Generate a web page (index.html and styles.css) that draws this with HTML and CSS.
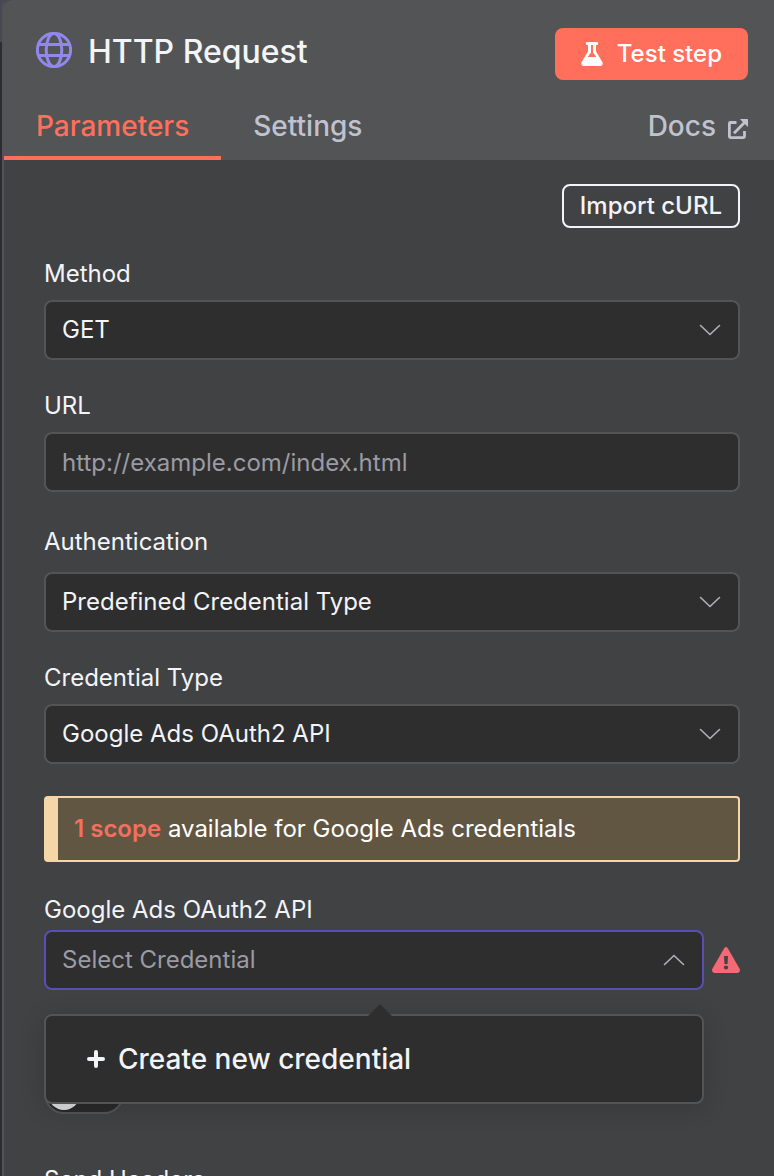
FILE: index.html
```html
<!DOCTYPE html>
<html lang="en">
<head>
<meta charset="utf-8">
<meta name="viewport" content="width=device-width, initial-scale=1">
<title>HTTP Request</title>
<link rel="stylesheet" href="styles.css">
</head>
<body>
<main class="panel">
  <header class="header">
    <div class="title-row">
      <svg class="globe" viewBox="0 0 36 36" aria-hidden="true">
        <circle cx="18" cy="18" r="16.6"/>
        <ellipse cx="18" cy="18" rx="7.8" ry="16.6"/>
        <path d="M2.5 12.4h31M2.5 23.6h31"/>
      </svg>
      <h1 class="title">HTTP Request</h1>
      <button class="test-button" type="button">
        <svg class="flask" viewBox="0 0 22 24" aria-hidden="true">
          <path fill-rule="evenodd" d="M5.8 0h10.4q.8 0 .8.8v1.4q0 .8-.8.8H15v6.6l6.2 10.1C22.4 21.8 21.2 24 18.9 24H3.1C.8 24-.4 21.800.8 19.7L7 9.6V3H5.8Q5 3 5 2.200V.8Q5 0 5.800 0zM10 3v7.400L6.700 15h8.600L12 10.400V3z"/>
        </svg>
        Test step
      </button>
    </div>
    <nav class="tabs">
      <a class="tab tab-active" href="#parameters">Parameters</a>
      <a class="tab" href="#settings">Settings</a>
      <a class="tab tab-docs" href="#docs">Docs
        <svg class="external" viewBox="0 0 20 20" aria-hidden="true">
          <path class="external-line" d="M8.500 3.500H2.400Q1.400 3.500 1.400 4.500V17.600Q1.400 18.600 2.400 18.600H15.500Q16.500 18.600 16.500 17.600V12M6 14.300L17 3"/>
          <path class="external-head" d="M12 0h7.200q.8 0 .8.8V8l-2.400-2.200-3.400-3.400z"/>
        </svg>
      </a>
    </nav>
  </header>

  <form class="form" id="parameters">
    <button class="import-button" type="button">Import cURL</button>

    <div class="field">
      <label class="label" for="method">Method</label>
      <div class="select-wrap">
        <select class="control" id="method"><option>GET</option></select>
        <svg class="chevron" viewBox="0 0 22 12" aria-hidden="true"><path d="M1.500 1.500l9.500 9 9.500-9"/></svg>
      </div>
    </div>

    <div class="field">
      <label class="label" for="url">URL</label>
      <input class="control" id="url" type="text" placeholder="http://example.com/index.html">
    </div>

    <div class="field field-spaced">
      <label class="label" for="auth">Authentication</label>
      <div class="select-wrap">
        <select class="control" id="auth"><option>Predefined Credential Type</option></select>
        <svg class="chevron" viewBox="0 0 22 12" aria-hidden="true"><path d="M1.500 1.500l9.500 9 9.500-9"/></svg>
      </div>
    </div>

    <div class="field">
      <label class="label" for="type">Credential Type</label>
      <div class="select-wrap">
        <select class="control" id="type"><option>Google Ads OAuth2 API</option></select>
        <svg class="chevron" viewBox="0 0 22 12" aria-hidden="true"><path d="M1.500 1.500l9.500 9 9.500-9"/></svg>
      </div>
    </div>

    <p class="notice"><a class="scope" href="#scopes">1 scope</a> available for Google Ads credentials</p>

    <div class="field field-tight">
      <label class="label" for="credential">Google Ads OAuth2 API</label>
      <div class="credential-row">
        <div class="select-wrap">
          <select class="control control-open" id="credential"><option>Select Credential</option></select>
          <svg class="chevron" viewBox="0 0 22 12" aria-hidden="true"><path d="M1.500 10.500l9.500-9 9.500 9"/></svg>
          <div class="menu">
            <svg class="menu-arrow" viewBox="0 0 24 12" aria-hidden="true"><path d="M0 12L11 1q1-1 2 0l11 11z"/></svg>
            <button class="menu-item" type="button">
              <svg class="plus" viewBox="0 0 18 18" aria-hidden="true"><path d="M9 2v14M2 9h14"/></svg>
              Create new credential
            </button>
          </div>
        </div>
        <svg class="warning" viewBox="0 0 28 26" role="img" aria-label="Warning">
          <path class="warning-shape" d="M12.200 1.200q1.800-2.200 3.600 0L27.600 21.800Q28.800 25.400 25.800 26H2.200Q-.8 25.400.4 21.800z"/>
          <path class="warning-mark" d="M12 9h4l-.5 8h-3z"/>
          <circle class="warning-mark" cx="14" cy="20.500" r="2.100"/>
        </svg>
      </div>
    </div>

    <input class="toggle" type="checkbox" aria-label="Toggle">
    <label class="label headers-label" for="headers">Send Headers</label>
    <input class="toggle" id="headers" type="checkbox">
  </form>
</main>
</body>
</html>
```
FILE: styles.css
```css
* {
  box-sizing: border-box;
}

body {
  margin: 0;
  height: 100vh;
  overflow: hidden;
  padding-left: 2px;
  background: linear-gradient(#484855 42px, #2d2d2f 42px);
  color: #f2f4f7;
  font: 24px/32px Inter, "Liberation Sans", sans-serif;
}

button,
input,
select {
  margin: 0;
  font: inherit;
  color: inherit;
}

a {
  color: inherit;
  text-decoration: none;
}

.panel {
  min-height: 100%;
  border-left: 2px solid #525356;
  border-top-left-radius: 8px;
  background: #414244;
}

.header {
  height: 160px;
  display: flex;
  flex-direction: column;
  justify-content: space-between;
  padding-top: 28px;
  border-top-left-radius: 8px;
  background: #525455;
}

.title-row {
  display: flex;
  align-items: center;
  padding: 0 26px 0 32px;
}

.globe {
  width: 36px;
  height: 36px;
  margin: 0 16px 8px 0;
  fill: none;
  stroke: #9187ed;
  stroke-width: 3;
}

.title {
  flex: 1;
  margin: 0 0 4px;
  font-size: 32px;
  line-height: 40px;
  font-weight: 500;
}

.test-button {
  display: flex;
  align-items: center;
  gap: 14px;
  height: 52px;
  padding: 0 26px;
  border: 0;
  border-radius: 8px;
  background: #ff6f5c;
  color: #fff;
  font-weight: 500;
}

.flask {
  width: 22px;
  height: 24px;
  fill: #fff;
}

.tabs {
  display: flex;
  font-size: 28px;
  font-weight: 500;
  color: #c0c2cf;
}

.tab {
  height: 54px;
  padding: 4px 32px 0;
  border-bottom: 4px solid transparent;
}

.tab-active {
  border-color: #ff6f5c;
  color: #ff6f5c;
}

.tab-docs {
  display: flex;
  gap: 12px;
  margin-left: auto;
  padding-right: 26px;
}

.external {
  width: 20px;
  height: 20px;
  margin-top: 9px;
}

.external-line {
  fill: none;
  stroke: #c0c2cf;
  stroke-width: 2.8;
}

.external-head {
  fill: #c0c2cf;
}

.form {
  display: flex;
  flex-direction: column;
  gap: 30px;
  padding: 24px 34px 0 40px;
}

.import-button {
  align-self: flex-end;
  height: 44px;
  padding: 0 16px;
  border: 2px solid #f2f4f7;
  border-radius: 8px;
  background: transparent;
  font-weight: 500;
}

.field {
  display: flex;
  flex-direction: column;
  gap: 10px;
}

.field-spaced {
  gap: 14px;
  padding-top: 4px;
}

.field-tight {
  gap: 4px;
  padding-top: 2px;
}

.select-wrap {
  position: relative;
  flex: 1;
  display: grid;
  align-items: center;
}

.control {
  width: 100%;
  height: 60px;
  padding: 0 16px;
  border: 2px solid #525456;
  border-radius: 8px;
  outline: 0;
  appearance: none;
  background: #2e2e2e;
}

.control::placeholder {
  color: #9a9ba5;
  opacity: 1;
}

.control-open {
  border-color: #5c4db5;
  color: #9a9ba5;
}

.select-wrap > .control,
.select-wrap > .chevron {
  grid-area: 1 / 1;
}

.chevron {
  justify-self: end;
  width: 22px;
  height: 12px;
  margin-right: 19px;
  fill: none;
  stroke: #b0b1ba;
  stroke-width: 1.6;
  stroke-linecap: round;
  pointer-events: none;
}

.notice {
  margin: 2px 0 0;
  padding: 15px 16px;
  border: 2px solid #f4d6a8;
  border-left-width: 14px;
  border-radius: 4px;
  background: #615642;
  color: #fff;
}

.scope {
  color: #f3705e;
  font-weight: 600;
}

.credential-row {
  display: flex;
  align-items: center;
  gap: 8px;
}

.warning {
  width: 28px;
  height: 26px;
}

.warning-shape {
  fill: #f56876;
}

.warning-mark {
  fill: #414244;
}

.menu {
  position: absolute;
  top: 84px;
  left: 0;
  right: 0;
  z-index: 1;
  border: 2px solid #525456;
  border-radius: 8px;
  background: #2e2e2e;
  box-shadow: 0 4px 24px rgba(0, 0, 0, 0.16);
}

.menu-arrow {
  position: absolute;
  top: -12px;
  left: 322px;
  width: 24px;
  height: 12px;
  fill: #2e2e2e;
}

.menu-item {
  display: flex;
  align-items: center;
  gap: 13px;
  width: 100%;
  height: 86px;
  padding: 0 41px;
  border: 0;
  background: transparent;
  font-size: 28px;
  font-weight: 500;
}

.plus {
  width: 18px;
  height: 18px;
  fill: none;
  stroke: #f2f4f7;
  stroke-width: 4;
  stroke-linecap: round;
}

.toggle {
  flex: none;
  width: 80px;
  height: 40px;
  padding: 2px;
  border: 2px solid #525456;
  border-radius: 20px;
  appearance: none;
  background: #2a2a2a;
}

.toggle::before {
  content: "";
  display: block;
  width: 32px;
  height: 32px;
  border-radius: 50%;
  background: #dddee0;
}

.field-tight + .toggle {
  margin-top: 54px;
}

.headers-label {
  margin-top: 20px;
}
```
